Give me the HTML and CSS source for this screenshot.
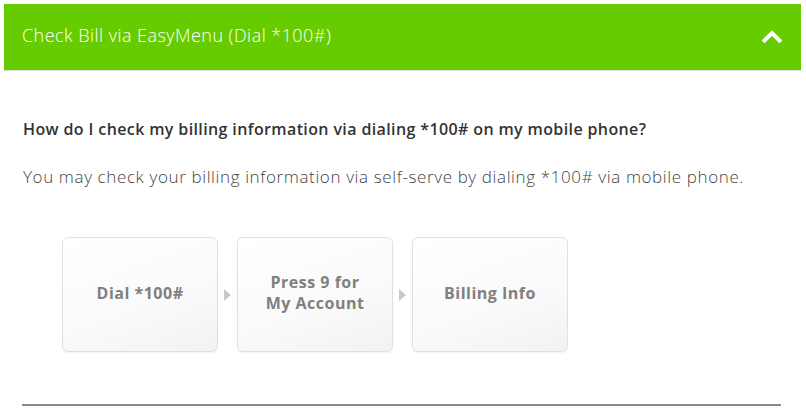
FILE: index.html
```html
<!DOCTYPE html>
<html>
<head>
<meta charset="utf-8">
<link rel="stylesheet" href="styles.css">
</head>
<body>
<div class="panel">
  <div class="panel-head">
    <span class="panel-title">Check Bill via EasyMenu (Dial *100#)</span>
    <svg class="chevron" width="20" height="14" viewBox="0 0 20 14"><path d="M2.5 11.5 L10 4 L17.5 11.5" fill="none" stroke="#fff" stroke-width="4" stroke-linecap="square"/></svg>
  </div>
  <div class="panel-body">
    <p class="question">How do I check my billing information via dialing *100# on my mobile phone?</p>
    <p class="answer">You may check your billing information via self-serve by dialing *100# via mobile phone.</p>
    <div class="steps">
      <div class="step">Dial *100#</div>
      <div class="arrow"></div>
      <div class="step">Press 9 for<br>My Account</div>
      <div class="arrow"></div>
      <div class="step">Billing Info</div>
    </div>
    <div class="rule"></div>
  </div>
</div>
</body>
</html>
```
FILE: styles.css
```css
html, body { margin: 0; padding: 0; background: #fff; }
.panel { margin: 4px 5px 0 4px; }
.panel-head {
  height: 66px;
  background: #66cc00;
  border-bottom: 1px solid #e2e2e2;
  display: flex;
  align-items: center;
  justify-content: space-between;
  padding: 0 19px 0 18px;
}
.panel-title {
  font-family: "Open Sans", sans-serif;
  font-weight: 300;
  font-size: 18px;
  letter-spacing: 0.45px;
  color: #fff;
  position: relative;
  top: -2px;
}
.chevron { display: block; margin-top: -2px; }
.panel-body { padding: 0 20px 0 18px; }
.question {
  margin: 47px 0 0 1px;
  font-family: "Open Sans", sans-serif;
  font-weight: 600;
  font-size: 16px;
  letter-spacing: 0.38px;
  color: #333;
  line-height: 22px;
}
.answer {
  margin: 26px 0 0 1px;
  font-family: "Open Sans", sans-serif;
  font-weight: 300;
  font-size: 17px;
  letter-spacing: 0.62px;
  color: #444;
  line-height: 22px;
}
.steps {
  display: flex;
  align-items: center;
  margin: 49px 0 0 40px;
}
.step {
  width: 154px;
  height: 113px;
  border: 1px solid #e0e0e0;
  border-radius: 6px;
  background: linear-gradient(160deg, #ffffff 0%, #fafafa 60%, #f2f2f2 100%);
  box-shadow: 0 1px 2px rgba(0,0,0,0.06);
  display: flex;
  align-items: center;
  justify-content: center;
  text-align: center;
  font-family: "Open Sans", sans-serif;
  font-weight: 700;
  font-size: 16px;
  letter-spacing: 0.5px;
  line-height: 21px;
  color: #808080;
  padding-bottom: 3px;
  box-sizing: content-box;
}
.step { height: 110px; }
.arrow {
  width: 19px;
  display: flex;
  justify-content: center;
}
.arrow::before {
  content: "";
  width: 0; height: 0;
  border-left: 7px solid #c8c8c8;
  border-top: 6px solid transparent;
  border-bottom: 6px solid transparent;
}
.rule {
  margin-top: 52px;
  height: 2px;
  background: #8a8a8a;
}
```
